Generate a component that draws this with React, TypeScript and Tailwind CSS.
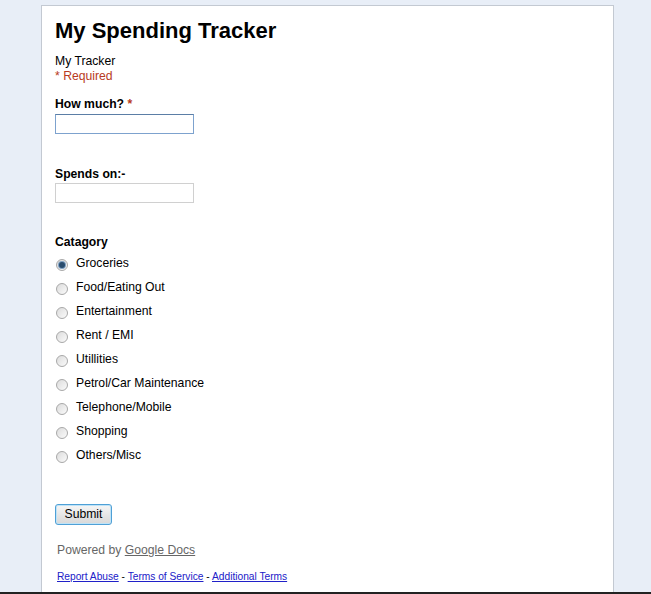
import { useState } from "react";

const categories = [
  "Groceries",
  "Food/Eating Out",
  "Entertainment",
  "Rent / EMI",
  "Utillities",
  "Petrol/Car Maintenance",
  "Telephone/Mobile",
  "Shopping",
  "Others/Misc",
];

function Radio({ checked }: { checked: boolean }) {
  return (
    <span className="relative inline-block h-[12px] w-[12px] rounded-full border border-[#a8a8a8] bg-gradient-to-br from-[#dcdcdc] to-[#fafafa]">
      {checked && (
        <span className="absolute left-[2px] top-[2px] h-[6px] w-[6px] rounded-full bg-[#2a4d6e] ring-1 ring-[#7d9fc2]" />
      )}
    </span>
  );
}

export default function App() {
  const [cat, setCat] = useState("Groceries");

  return (
    <div className="h-[594px] overflow-hidden border-b-2 border-[#222] bg-[#e8eef7] font-['Liberation_Sans',Arial,sans-serif] text-[12.2px] text-black">
      <div className="ml-[41px] mt-[5px] h-[600px] w-[573px] border border-[#c3c9d2] bg-white px-[13px] pt-[12px]">
        <h1 className="text-[22px] font-bold leading-[26px]">My Spending Tracker</h1>
        <div className="mt-[10px] leading-[15px]">My Tracker</div>
        <div className="leading-[14px] text-[#b83a22]">* Required</div>

        <div className="mt-[13px] font-bold leading-[16px]">
          How much? <span className="text-[#b83a22]">*</span>
        </div>
        <input
          autoFocus
          className="mt-[2px] block h-[20px] w-[139px] border border-[#7da2ce] border-t-[#5b7ea6] px-1 outline-none"
        />

        <div className="mt-[32px] font-bold leading-[16px]">Spends on:-</div>
        <input className="mt-[1px] block h-[20px] w-[139px] border border-[#d0d0d0] px-1 outline-none" />

        <div className="mt-[31px] font-bold leading-[16px]">Catagory</div>
        <div className="mt-[1px] flex flex-col">
          {categories.map((c) => (
            <label
              key={c}
              className="flex h-[24px] cursor-pointer items-center"
              onClick={() => setCat(c)}
            >
              <span className="ml-[1px] mt-[3px] flex w-[20px]">
                <Radio checked={cat === c} />
              </span>
              <span>{c}</span>
            </label>
          ))}
        </div>

        <button className="mt-[37px] block h-[21px] w-[57px] rounded-[3px] border border-[#4fa0d6] bg-gradient-to-b from-[#f6f6f6] to-[#d8d8d8] text-[12.2px] leading-[17px] shadow-[inset_0_0_0_1px_#bfe3f7]">
          Submit
        </button>

        <div className="mt-[16px] ml-[2px] text-[#666]">
          Powered by <span className="underline">Google Docs</span>
        </div>

        <div className="mt-[10px] ml-[2px] text-[10.2px] text-black">
          <span className="text-[#2020c8] underline">Report Abuse</span> -{" "}
          <span className="text-[#2020c8] underline">Terms of Service</span> -{" "}
          <span className="text-[#2020c8] underline">Additional Terms</span>
        </div>
      </div>
    </div>
  );
}
